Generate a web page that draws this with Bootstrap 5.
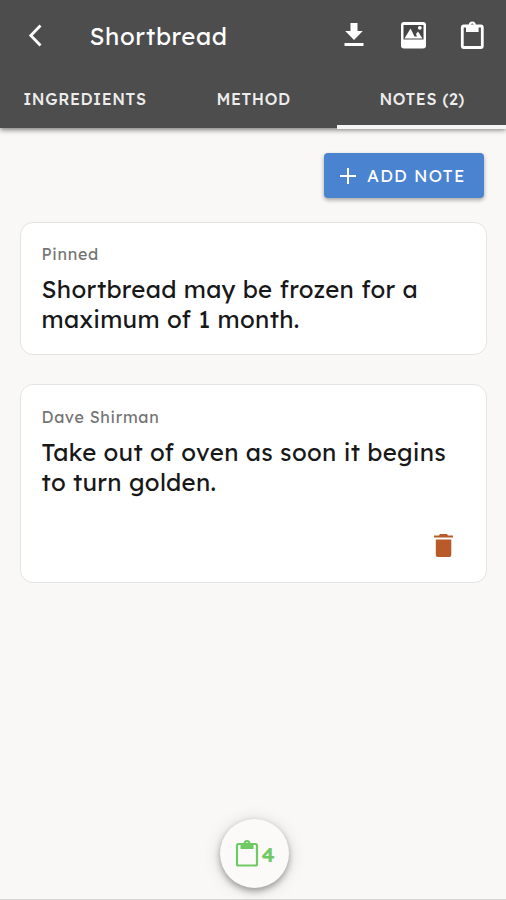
<!DOCTYPE html>
<html lang="en">
<head>
<meta charset="utf-8">
<meta name="viewport" content="width=device-width, initial-scale=1">
<title>Shortbread</title>
<link href="https://cdn.jsdelivr.net/npm/bootstrap@5.3.0/dist/css/bootstrap.min.css" rel="stylesheet">
<style>
body{font-family:Lexend,Inter,"Liberation Sans",sans-serif;background:#faf8f7;height:900px;overflow:hidden;border-bottom:1px solid #d4d4d4}
svg{display:block;flex:none;overflow:visible}
.app-head{background:#4d4d4d;height:128px;box-shadow:0 2px 5px rgba(0,0,0,.5)}
.app-bar{height:72px;padding:0 20px 0 21px}
.app-title{font-size:24px;line-height:30px;letter-spacing:.6px;margin-left:39.5px;font-weight:400}
.tool-icons{gap:31px}
.app-tabs{height:57px}
.app-tabs .nav-link{color:#ececec;font-size:16px;line-height:24px;padding:15px 0 0 1px;font-weight:500;letter-spacing:.6px;white-space:nowrap;border-bottom:4px solid transparent;border-radius:0;height:57px}
.app-tabs .nav-link.active{border-bottom-color:#f5f5f5}
.page-main{padding:25px 19px 0 20px}
.btn-note{background:#4a83d0;color:#fff;width:160px;height:45px;font-size:17px;line-height:24px;font-weight:400;letter-spacing:1.25px;border-radius:4px;padding:0 0 0 12px;gap:8px;margin-right:3px;box-shadow:0 2px 4px rgba(0,0,0,.35);white-space:nowrap}
.note-card{border:1.5px solid #e6e4e3;border-radius:13px;padding:21px 20px 0 20.5px;background:#fff}
.note-pinned{height:133px;margin-top:24px}
.note-user{height:199px;margin-top:29px}
.note-by{font-size:16px;line-height:20px;color:#747474;letter-spacing:.7px;margin-bottom:11px;font-weight:400}
.note-user .note-by{padding-top:1px}
.note-body{font-size:24px;line-height:29.5px;color:#181818;letter-spacing:.31px;white-space:nowrap;font-weight:400}
.note-trash{margin:34px 7px 0 0}
.fab{width:69px;height:69px;bottom:11px;left:220px;background:#fbfaf9;box-shadow:0 3px 6px rgba(0,0,0,.33),0 2px 18px rgba(0,0,0,.14);color:#71c966;font-size:21px;line-height:26px;font-weight:600}
</style>
<script src="https://cdn.jsdelivr.net/npm/bootstrap@5.3.0/dist/js/bootstrap.bundle.min.js"></script>
</head>
<body class="position-relative">
<header class="app-head">
  <div class="app-bar d-flex align-items-center text-white">
    <svg width="29" height="29" viewBox="0 0 29 29"><path d="M19.500 3.500 9.800 13.500 19.500 23.500" fill="none" stroke="#fff" stroke-width="2.800"/></svg>
    <h1 class="app-title mb-0">Shortbread</h1>
    <div class="tool-icons d-flex align-items-center ms-auto">
      <svg width="28" height="28" viewBox="0 0 28 28" fill="#fff"><path d="M10.500 1h7v8h5.300L14 18 5.200 9h5.300zM4.500 21h19v3h-19z"/></svg>
      <svg width="28" height="28" viewBox="-1 0 28 28"><rect x="1" y="0" width="25" height="26.500" rx="3" fill="#fff"/><path d="M3.500 3h20v14.500h-20z" fill="#454545"/><path d="M4.500 16.500 10.500 6.500 14.500 14.500h2.500l-1-2.500 2-2.500 4.500 7z" fill="#fff"/><circle cx="19.800" cy="5.800" r="1.900" fill="#fff"/></svg>
      <svg width="28" height="28" viewBox="0 0 28 28"><rect x="4.300" y="4" width="20" height="21.500" rx="1.500" fill="none" stroke="#fff" stroke-width="2.800"/><path fill="#fff" fill-rule="evenodd" d="M8 3h2.800a3.500 3.500 0 0 1 7 0h2.800v7h-12.600zM14.300 1.600a1.500 1.500 0 1 0 0 3 1.500 1.500 0 0 0 0-3z"/></svg>
    </div>
  </div>
  <nav class="app-tabs nav nav-justified flex-nowrap">
    <a class="nav-link col" href="#">INGREDIENTS</a>
    <a class="nav-link col" href="#">METHOD</a>
    <a class="nav-link col active" href="#">NOTES (2)</a>
  </nav>
</header>
<main class="page-main">
  <div class="d-flex justify-content-end">
    <button class="btn btn-note d-flex align-items-center"><svg width="22" height="22" viewBox="0 0 22 22"><path d="M11 3v16M3 11h16" stroke="#fff" stroke-width="2"/></svg><span>ADD NOTE</span></button>
  </div>
  <article class="note-card note-pinned">
    <div class="note-by">Pinned</div>
    <div class="note-body"><span>Shortbread may be frozen for a</span><br><span>maximum of 1 month.</span></div>
  </article>
  <article class="note-card note-user">
    <div class="note-by">Dave Shirman</div>
    <div class="note-body"><span>Take out of oven as soon it begins</span><br><span>to turn golden.</span></div>
    <div class="note-trash d-flex justify-content-end"><svg width="30" height="30" viewBox="0 0 30 30" fill="#b85a2a"><path d="M11 3h7l1 1.500h5v2H5v-2h5zM6.800 8.500h15.500V24a2 2 0 0 1-2 2H8.800a2 2 0 0 1-2-2z"/></svg></div>
  </article>
</main>
<div class="fab position-absolute rounded-circle d-flex align-items-center justify-content-center">
  <svg width="27" height="28" viewBox="0 0 27 28"><rect x="3" y="4" width="20" height="21.500" rx="1.500" fill="none" stroke="#71c966" stroke-width="2.200"/><path fill="#71c966" fill-rule="evenodd" d="M6.500 3.500h3a3.500 3.500 0 0 1 7 0h3V9h-13zM13 2.200a1.400 1.400 0 1 0 0 2.800 1.400 1.400 0 0 0 0-2.800z"/></svg><span>4</span>
</div>
</body>
</html>
